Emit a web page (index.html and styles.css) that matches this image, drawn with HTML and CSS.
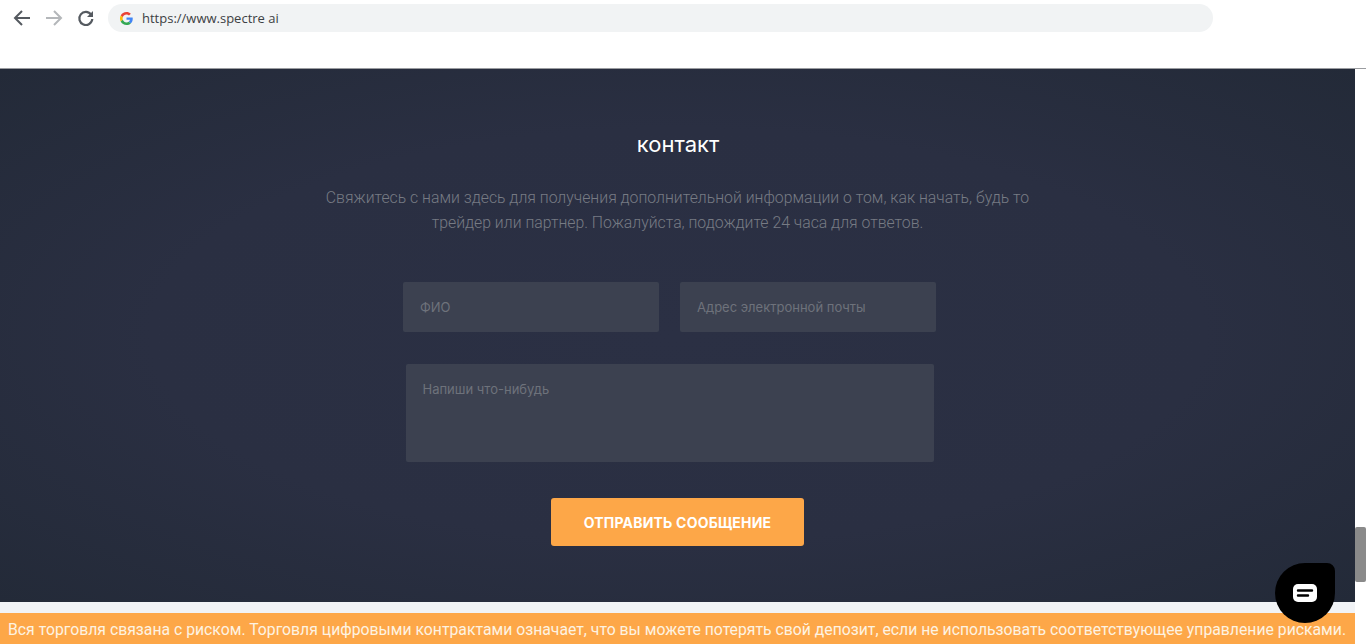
FILE: index.html
```html
<!DOCTYPE html>
<html lang="ru">
<head>
<meta charset="utf-8">
<title>Spectre.ai</title>
<link rel="stylesheet" href="styles.css">
</head>
<body>
<header class="toolbar">
  <svg class="nav-icon" viewBox="0 0 24 24"><path d="M20 12H5M12 5l-7 7 7 7" fill="none" stroke="#555a60" stroke-width="2"/></svg>
  <svg class="nav-icon" viewBox="0 0 24 24"><path d="M4 12h15M12 5l7 7-7 7" fill="none" stroke="#b4b7ba" stroke-width="2"/></svg>
  <svg class="nav-icon" viewBox="0 0 24 24"><path d="M17.200 8.800A6.500 6.500 0 1 0 18.300 13" fill="none" stroke="#555a60" stroke-width="2.200"/><path d="M19 5v6h-6z" fill="#555a60"/></svg>
  <div class="address">
    <svg class="g-logo" viewBox="0 0 48 48"><path fill="#ea4335" d="M24 9.5c3.5 0 6.700 1.300 9.200 3.400l6.800-6.800C35.900 2.400 30.300 0 24 0 14.600 0 6.500 5.400 2.600 13.200l7.900 6.100C12.400 13.700 17.700 9.500 24 9.500z"/><path fill="#4285f4" d="M47 24.500c0-1.600-.2-3.100-.4-4.500H24v9h13c-.6 3-2.300 5.500-4.800 7.200l7.700 6C44.300 38 47 31.800 47 24.500z"/><path fill="#fbbc05" d="M10.500 28.700A14.500 14.500 0 0 1 10.500 19.300l-7.900-6.100a24 24 0 0 0 0 21.600z"/><path fill="#34a853" d="M24 48c6.500 0 11.900-2.100 15.900-5.800l-7.700-6c-2.200 1.500-4.900 2.300-8.200 2.300-6.300 0-11.600-4.200-13.500-9.800l-7.900 6.100C6.500 42.600 14.600 48 24 48z"/></svg>
    <span class="url">https://www.spectre ai</span>
  </div>
</header>
<div class="viewport">
  <main class="page">
    <section class="contact">
      <h1 class="title">контакт</h1>
      <p class="lead">Свяжитесь с нами здесь для получения дополнительной информации о том, как начать, будь то трейдер или партнер. Пожалуйста, подождите 24 часа для ответов.</p>
      <form class="form">
        <div class="form-row">
          <div class="field">ФИО</div>
          <div class="field">Адрес электронной почты</div>
        </div>
        <div class="field field-area">Напиши что-нибудь</div>
        <div class="submit">ОТПРАВИТЬ СООБЩЕНИЕ</div>
      </form>
    </section>
    <div class="gap"></div>
    <footer class="risk">Вся торговля связана с риском. Торговля цифровыми контрактами означает, что вы можете потерять свой депозит, если не использовать соответствующее управление рисками.</footer>
  </main>
  <div class="scrollbar"><div class="thumb"></div></div>
</div>
<button class="chat" type="button" aria-label="Чат">
  <svg viewBox="0 0 24 18" class="chat-icon"><rect x="0" y="0" width="24" height="18" rx="5" fill="#fff"/><path d="M5 6.500h14M5 11.500h10" stroke="#000" stroke-width="2.400" stroke-linecap="round"/></svg>
</button>
</body>
</html>
```
FILE: styles.css
```css
* { box-sizing: border-box; }
html, body { margin: 0; height: 644px; overflow: hidden; background: #fff; }
body { display: flex; flex-direction: column; font-family: Inter, "Liberation Sans", sans-serif; }

.toolbar { height: 69px; flex: none; display: flex; align-items: flex-start; padding: 4px 0 0 10px; background: #fff; border-bottom: 1px solid #9a9ca0; }
.nav-icon { width: 24px; height: 24px; margin: 2px 8px 0 0; flex: none; }
.address { width: 1105px; height: 28px; margin-left: 2px; display: flex; align-items: center; gap: 9px; padding-left: 12px; background: #f1f3f4; border-radius: 14px; }
.g-logo { width: 13px; height: 13px; flex: none; }
.url { font: 13px "Open Sans", sans-serif; color: #3c4043; }

.viewport { flex: 1; display: flex; min-height: 0; }
.page { width: 1355px; flex: none; display: flex; flex-direction: column; }
.contact { height: 533px; flex: none; display: flex; flex-direction: column; align-items: center; padding-top: 59px; background: radial-gradient(ellipse at center, #2b3044 0%, #2a2f42 55%, #232a38 100%); }
.title { margin: 0 0 0 1px; font-size: 22px; line-height: 32px; font-weight: 400; color: #fff; }
.lead { width: 720px; margin: 25px 0 0; font: 300 15.800px/25px Roboto, sans-serif; text-align: center; color: #777b84; }
.form { display: flex; flex-direction: column; align-items: center; margin-top: 47px; }
.form-row { display: flex; gap: 21px; margin-right: 16px; }
.field { width: 256px; height: 50px; padding: 17px; font-size: 13px; line-height: 17px; color: #6e727b; background: #3c4150; border-radius: 2px; }
.field-area { width: 528px; height: 98px; margin: 32px 16px 0 0; }
.submit { width: 253px; height: 48px; margin-top: 36px; display: flex; align-items: center; justify-content: center; font-size: 14px; font-weight: 700; letter-spacing: .2px; color: #fff; background: #fda748; border-radius: 3px; }
.gap { height: 11px; flex: none; background: #f1f3f6; }
.risk { height: 31px; flex: none; padding-left: 8px; font: 15.770px/33px Roboto, sans-serif; white-space: nowrap; color: #fdf3e2; background: #fda748; }

.scrollbar { width: 11px; flex: none; position: relative; background: #fff; }
.thumb { position: absolute; top: 458px; left: 0; width: 11px; height: 55px; background: #8a8a8a; border-radius: 2px; }

.chat { position: absolute; left: 1275px; top: 563px; width: 60px; height: 60px; padding: 0; border: 0; display: flex; align-items: center; justify-content: center; background: #000; border-radius: 50% 8px 50% 50%; }
.chat-icon { width: 24px; height: 18px; }
```
